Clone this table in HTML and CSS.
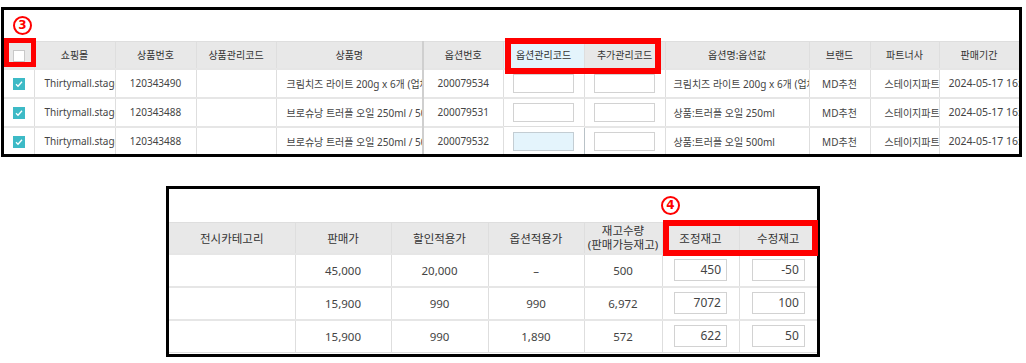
FILE: index.html
```html
<!DOCTYPE html>
<html lang="ko">
<head>
<meta charset="utf-8">
<link rel="stylesheet" href="styles.css">
</head>
<body>
<div class="panel panel-top">
  <table class="grid grid-top">
    <colgroup>
      <col style="width:30px"><col style="width:81px"><col style="width:81px"><col style="width:80px">
      <col style="width:147px"><col style="width:80px"><col style="width:81px"><col style="width:81px">
      <col style="width:144px"><col style="width:61px"><col style="width:69px"><col style="width:80px">
    </colgroup>
    <thead>
      <tr>
        <th><span class="cb-empty"></span></th>
        <th>쇼핑몰</th><th>상품번호</th><th>상품관리코드</th><th class="sep-r">상품명</th>
        <th>옵션번호</th><th class="th-active">옵션관리코드</th><th>추가관리코드</th>
        <th>옵션명:옵션값</th><th>브랜드</th><th>파트너사</th><th>판매기간</th>
      </tr>
    </thead>
    <tbody>
      <tr>
        <td><svg class="cb" width="12" height="12" viewBox="0 0 12 12"><rect width="12" height="12" fill="#3dbac6"/><polyline points="3,6.3 5,8.2 9,3.8" fill="none" stroke="#fff" stroke-width="1.3"/></svg></td>
        <td class="left">Thirtymall.stage</td><td>120343490</td><td></td>
        <td class="left sep-r">크림치즈 라이트 200g x 6개 (업체</td><td>200079534</td>
        <td><span class="inp"></span></td><td><span class="inp"></span></td>
        <td class="left opt">크림치즈 라이트 200g x 6개 (업체</td><td>MD추천</td>
        <td class="partner">스테이지파트너사</td><td class="date">2024-05-17 16:00</td>
      </tr>
      <tr>
        <td><svg class="cb" width="12" height="12" viewBox="0 0 12 12"><rect width="12" height="12" fill="#3dbac6"/><polyline points="3,6.3 5,8.2 9,3.8" fill="none" stroke="#fff" stroke-width="1.3"/></svg></td>
        <td class="left">Thirtymall.stage</td><td>120343488</td><td></td>
        <td class="left sep-r">브로슈낭 트러플 오일 250ml / 500ml</td><td>200079531</td>
        <td><span class="inp"></span></td><td><span class="inp"></span></td>
        <td class="left opt">상품:트러플 오일 250ml</td><td>MD추천</td>
        <td class="partner">스테이지파트너사</td><td class="date">2024-05-17 16:00</td>
      </tr>
      <tr>
        <td><svg class="cb" width="12" height="12" viewBox="0 0 12 12"><rect width="12" height="12" fill="#3dbac6"/><polyline points="3,6.3 5,8.2 9,3.8" fill="none" stroke="#fff" stroke-width="1.3"/></svg></td>
        <td class="left">Thirtymall.stage</td><td>120343488</td><td></td>
        <td class="left sep-r">브로슈낭 트러플 오일 250ml / 500ml</td><td>200079532</td>
        <td class="td-focus"><span class="inp inp-focus"></span></td><td><span class="inp"></span></td>
        <td class="left opt">상품:트러플 오일 500ml</td><td>MD추천</td>
        <td class="partner">스테이지파트너사</td><td class="date">2024-05-17 16:00</td>
      </tr>
    </tbody>
  </table>
  <span class="badge badge-3">3</span>
  <div class="hl hl-check"></div>
  <div class="hl hl-codes"></div>
</div>

<div class="panel panel-bottom">
  <table class="grid grid-bottom">
    <colgroup>
      <col style="width:126px"><col style="width:96px"><col style="width:97px"><col style="width:96px">
      <col style="width:78px"><col style="width:77px"><col style="width:78px">
    </colgroup>
    <thead>
      <tr>
        <th>전시카테고리</th><th>판매가</th><th>할인적용가</th><th>옵션적용가</th>
        <th class="two">재고수량<br>(판매가능재고)</th><th>조정재고</th><th>수정재고</th>
      </tr>
    </thead>
    <tbody>
      <tr><td></td><td>45,000</td><td>20,000</td><td>–</td><td>500</td><td><span class="num">450</span></td><td><span class="num">-50</span></td></tr>
      <tr><td></td><td>15,900</td><td>990</td><td>990</td><td>6,972</td><td><span class="num">7072</span></td><td><span class="num">100</span></td></tr>
      <tr><td></td><td>15,900</td><td>990</td><td>1,890</td><td>572</td><td><span class="num">622</span></td><td><span class="num">50</span></td></tr>
    </tbody>
  </table>
  <span class="badge badge-4">4</span>
  <div class="hl hl-stock"></div>
</div>
</body>
</html>
```

FILE: styles.css
```css
body {
  margin: 0;
  background: #fff;
  font-family: "Noto Sans", "Noto Sans CJK KR", sans-serif;
  color: #444;
}

.panel {
  position: relative;
  border: 3px solid #000;
  background: #fff;
}

.panel-top {
  margin: 7px 0 0 1px;
  width: 1015px;
  height: 113px;
  padding-top: 31px;
  overflow: hidden;
}

.panel-bottom {
  margin: 29px 0 0 166px;
  width: 648px;
  height: 132px;
  padding-top: 33px;
}

.grid {
  border-collapse: collapse;
  table-layout: fixed;
}

.grid th,
.grid td {
  border: 1px solid #dedede;
  padding: 0;
  white-space: nowrap;
  overflow: hidden;
  text-align: center;
  vertical-align: middle;
}

.grid th {
  background: #e8e8e8;
  font-weight: normal;
  color: #333;
}

.grid tbody td {
  border-top: 2px solid #e6e6e6;
}

.grid-top {
  width: 1015px;
  font-size: 10px;
}

.grid-top thead tr { height: 27px; }
.grid-top tbody tr { height: 29px; }

.grid-top tr > :first-child { border-left: none; }

.grid-top .left {
  text-align: left;
  padding-left: 10px;
}

.grid-top .opt { padding-left: 8px; }

.grid-top .partner {
  text-align: left;
  padding-left: 14px;
}

.grid-top .date {
  text-align: left;
  padding-left: 9px;
  font-size: 10.5px;
}

.grid-top .sep-r { border-right: 2px solid #cfcfcf; }

.grid-top .th-active { background: #e4f4fc; }

.cb-empty {
  display: inline-block;
  width: 10px;
  height: 10px;
  background: #fff;
  border: 1px solid #c9c9c9;
  vertical-align: middle;
}

.cb { display: inline-block; vertical-align: middle; }

.inp {
  display: inline-block;
  width: 59px;
  height: 17px;
  border: 1px solid #d2d2d2;
  background: #fff;
  vertical-align: middle;
}

.inp-focus {
  background: #e4f4fc;
  border-color: #c3cdd3;
}

.grid-top .td-focus {
  border: 1px solid #b9c2c7;
}

.grid-bottom {
  width: 648px;
  font-size: 11.5px;
}

.grid-bottom thead tr { height: 31px; }
.grid-bottom tbody tr { height: 33px; }

.grid-bottom tr > :first-child { border-left: none; }
.grid-bottom tr > :last-child { border-right: none; }

.grid-bottom .two { line-height: 1.2; }

.num {
  display: inline-block;
  box-sizing: border-box;
  width: 53px;
  height: 22px;
  line-height: 20px;
  border: 1px solid #d2d2d2;
  text-align: right;
  padding-right: 5px;
  vertical-align: middle;
  font-size: 12px;
}

.badge {
  position: absolute;
  box-sizing: border-box;
  width: 19px;
  height: 19px;
  border: 2px solid #f00;
  border-radius: 50%;
  color: #f00;
  font-family: "DejaVu Sans", sans-serif;
  font-weight: bold;
  font-size: 12px;
  line-height: 15px;
  text-align: center;
}

.badge-3 { left: 9px; top: 6px; }
.badge-4 { left: 492px; top: 7px; }

.hl {
  position: absolute;
  box-sizing: border-box;
  border: 5px solid #f00;
}

.hl-check { left: 0; top: 28px; width: 32px; height: 29px; }
.hl-codes { left: 501px; top: 28px; width: 156px; height: 36px; border-width: 6px; }
.hl-stock { left: 494px; top: 31px; width: 155px; height: 36px; border-width: 6px; }
```
